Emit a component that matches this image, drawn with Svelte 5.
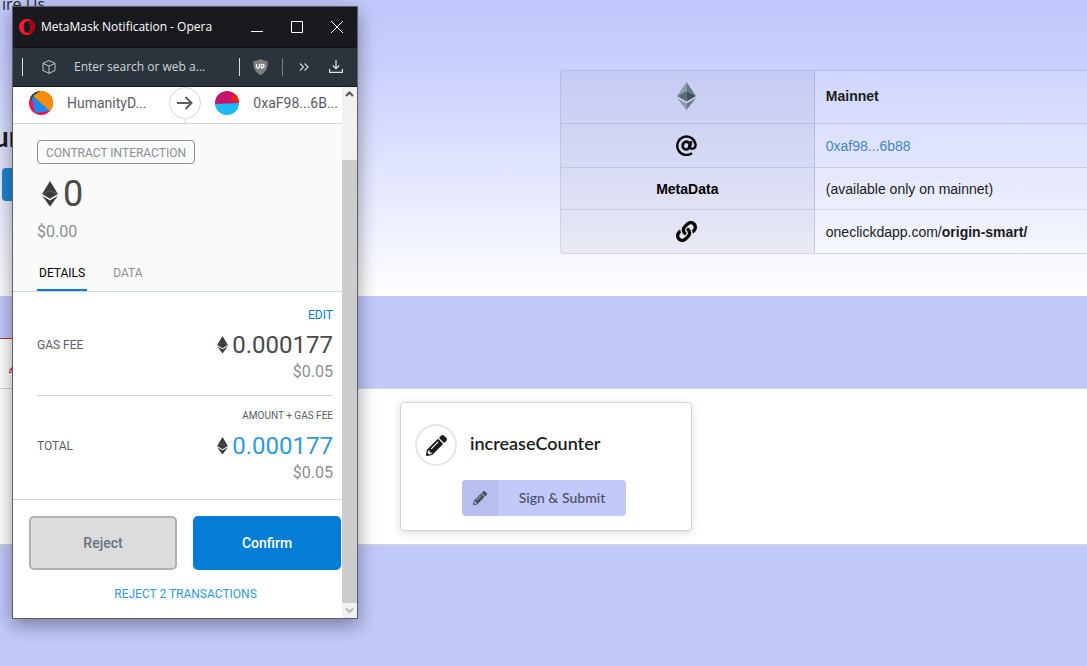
<script>
  const fees = [
    { label: 'GAS FEE', note: 'EDIT', amount: '0.000177', fiat: '$0.05', editable: true },
    { label: 'TOTAL', note: 'AMOUNT + GAS FEE', amount: '0.000177', fiat: '$0.05', editable: false }
  ];
</script>

{#snippet ether(size)}
  <svg class="ether" width={size} height={size * 1.6} viewBox="0 0 16 26" aria-hidden="true">
    <path fill="#393b3e" d="M8 0 16 13.3 8 18 0 13.3Z" />
    <path fill="#393b3e" d="M0 15 8 19.7 16 15 8 26Z" />
    <path fill="none" stroke="#85888b" stroke-width=".5" d="M0 13.3 8 9.8 16 13.3" />
  </svg>
{/snippet}

{#snippet pencil(size)}
  <svg width={size} height={size} viewBox="0 0 512 512" fill="currentColor" aria-hidden="true">
    <path d="M497.9 142.1l-46.1 46.1c-4.7 4.7-12.3 4.7-17 0l-111-111c-4.7-4.7-4.7-12.3 0-17l46.1-46.1c18.7-18.7 49.1-18.7 67.9 0l60.1 60.1c18.8 18.7 18.8 49.1 0 67.9zM284.2 99.8L21.6 362.4.4 483.9c-2.9 16.4 11.4 30.6 27.8 27.8l121.5-21.3 262.6-262.6c4.7-4.7 4.7-12.3 0-17l-111-111c-4.8-4.7-12.4-4.7-17.1 0zM124.1 339.9c-5.5-5.5-5.5-14.3 0-19.8l154-154c5.5-5.5 14.3-5.5 19.8 0s5.5 14.3 0 19.8l-154 154c-5.5 5.5-14.3 5.5-19.8 0zM88 424h48v36.3l-64.5 11.3-31.1-31.1L51.7 376H88v48z" />
  </svg>
{/snippet}

<main class="page">
  <section class="hero">
    <div class="intro">
      <a class="hire" href="#hire">ire Us</a>
      <h1>ur</h1>
      <button class="primary" aria-label="Open"></button>
    </div>
    <div class="meta">
      <table>
        <tbody>
          <tr class="tall">
            <th scope="row">
              <svg width="19" height="28" viewBox="0 0 19 28" role="img" aria-label="Network">
                <path fill="#8c9fa7" d="M9.5 0v9L0 14Z" />
                <path fill="#667b86" d="M9.5 0v9L19 14Z" />
                <path fill="#5a6c77" d="M9.5 9v10.5L0 14Z" />
                <path fill="#3f505c" d="M9.5 9v10.5L19 14Z" />
                <path fill="#8c9fa7" d="M0 16 9.5 21.5V28Z" />
                <path fill="#667b86" d="M19 16 9.5 21.5V28Z" />
              </svg>
            </th>
            <td><b>Mainnet</b></td>
          </tr>
          <tr class="medium">
            <th scope="row">
              <svg width="21" height="21" viewBox="0 0 21 21" fill="none" stroke="#080808" role="img" aria-label="Address">
                <path stroke-width="2.4" d="M16 18.100A9.200 9.200 0 1 1 19.600 9.600c0 2.800-1.600 4.200-3.500 4.200-1.600 0-2.200-.8-1.900-2.200l1.100-5.400" />
                <ellipse stroke-width="2.700" cx="10.200" cy="10.600" rx="3.500" ry="3.900" transform="rotate(18 10.200 10.600)" />
                <path stroke-width="2" d="M14.500 6.200l-1.300 6" />
              </svg>
            </th>
            <td><a href="#address">0xaf98...6b88</a></td>
          </tr>
          <tr>
            <th scope="row">MetaData</th>
            <td>(available only on mainnet)</td>
          </tr>
          <tr class="medium">
            <th scope="row">
              <svg width="21" height="21" viewBox="0 0 512 512" fill="#080808" role="img" aria-label="Link">
                <path d="M326.612 185.391c59.747 59.809 58.927 155.698.36 214.59-.11.12-.24.25-.36.37l-67.2 67.2c-59.27 59.27-155.699 59.262-214.96 0-59.27-59.26-59.27-155.7 0-214.96l37.106-37.106c9.84-9.84 26.786-3.3 27.294 10.606.648 17.722 3.826 35.527 9.69 52.721 1.986 5.822.567 12.262-3.783 16.612l-13.087 13.087c-28.026 28.026-28.905 73.66-1.155 101.96 28.024 28.579 74.086 28.749 102.325.51l67.2-67.19c28.191-28.191 28.073-73.757 0-101.83-3.701-3.694-7.429-6.564-10.341-8.569a16.037 16.037 0 0 1-6.947-12.606c-.396-10.567 3.348-21.456 11.698-29.806l21.054-21.055c5.521-5.521 14.182-6.199 20.584-1.731a152.482 152.482 0 0 1 20.522 17.197zM467.547 44.449c-59.261-59.262-155.69-59.27-214.96 0l-67.2 67.2c-.12.12-.25.25-.36.37-58.566 58.892-59.387 154.781.36 214.59a152.454 152.454 0 0 0 20.521 17.196c6.402 4.468 15.064 3.789 20.584-1.731l21.054-21.055c8.35-8.35 12.094-19.239 11.698-29.806a16.037 16.037 0 0 0-6.947-12.606c-2.912-2.005-6.64-4.875-10.341-8.569-28.073-28.073-28.191-73.639 0-101.83l67.2-67.19c28.239-28.239 74.3-28.069 102.325.51 27.75 28.3 26.872 73.934-1.155 101.96l-13.087 13.087c-4.35 4.35-5.769 10.79-3.783 16.612 5.864 17.194 9.042 34.999 9.69 52.721.509 13.906 17.454 20.446 27.294 10.606l37.106-37.106c59.271-59.259 59.271-155.699.001-214.959z" />
              </svg>
            </th>
            <td>oneclickdapp.com/<b>origin-smart/</b></td>
          </tr>
        </tbody>
      </table>
    </div>
  </section>

  <section class="band">
    <div class="notice">{@render pencil(12)}</div>
  </section>

  <section class="functions">
    <article class="card">
      <header>
        <span class="badge">{@render pencil(21)}</span>
        <h2>increaseCounter</h2>
      </header>
      <button class="submit">
        <span class="submit-icon">{@render pencil(14)}</span>
        <span class="submit-text">Sign &amp; Submit</span>
      </button>
    </article>
  </section>

  <div class="window" role="dialog" aria-label="MetaMask Notification">
    <div class="titlebar">
      <svg width="16" height="16" viewBox="0 0 16 16" aria-hidden="true">
        <path fill="#ff1b2d" fill-rule="evenodd" d="M8 0a8 8 0 1 0 0 16A8 8 0 0 0 8 0Zm0 2.2c2 0 3.3 2.5 3.3 5.8S10 13.8 8 13.8 4.7 11.300 4.700 8 6 2.200 8 2.200Z" />
        <path fill="#a70014" d="M8 2.200C10 .8 12 1 13.400 2.200a8 8 0 0 1 0 11.600C12 15 10 15.200 8 13.800c2 0 3.300-2.500 3.300-5.800S10 2.200 8 2.200Z" />
      </svg>
      <span class="title">MetaMask Notification - Opera</span>
      <button class="ctl" aria-label="Minimize"><svg width="12" height="12" viewBox="0 0 12 12"><path d="M0 10.500h12" /></svg></button>
      <button class="ctl" aria-label="Maximize"><svg width="12" height="12" viewBox="0 0 12 12"><path d="M.5.5h11v11H.5z" /></svg></button>
      <button class="ctl" aria-label="Close"><svg width="12" height="12" viewBox="0 0 12 12"><path d="M0 0 12 12M12 0 0 12" /></svg></button>
    </div>

    <div class="toolbar">
      <i class="sep"></i>
      <svg class="cube" width="14" height="14" viewBox="0 0 14 14" fill="none" stroke="#c3c7ca" stroke-linejoin="round" aria-hidden="true">
        <path d="M7 .6 13 3.300v7.200L7 13.400 1 10.500V3.300ZM1 3.300 7 6.200l6-2.900M7 6.200v7.200" />
      </svg>
      <input class="address" aria-label="Address" placeholder="Enter search or web a..." />
      <i class="sep"></i>
      <svg class="shield" width="15" height="16" viewBox="0 0 15 16" role="img" aria-label="Blocker">
        <path fill="#7d7f81" d="M7.500 0C9.500 1.300 12 2 14.500 2c.5 6-.5 10.500-7 14C1 12.500 0 8 .5 2 3 2 5.500 1.300 7.500 0Z" />
        <path fill="none" stroke="#fff" stroke-width="1.200" d="M3.500 5v2.600a1.500 1.500 0 0 0 3 0V5M8.400 5.300v3.500h1a1.700 1.700 0 0 0 0-3.500Z" />
      </svg>
      <i class="sep dim"></i>
      <svg class="more" width="10" height="8" viewBox="0 0 10 8" fill="none" stroke="#d6d9db" stroke-width="1.100" aria-hidden="true">
        <path d="M1 .5 4.500 4 1 7.500M5.500.5 9 4 5.500 7.500" />
      </svg>
      <svg width="14" height="14" viewBox="0 0 14 14" fill="none" stroke="#e1e3e4" stroke-width="1.200" aria-hidden="true">
        <path d="M7 0v8.500M3.800 5.500 7 8.700l3.200-3.200M.6 9v3.400h12.800V9" />
      </svg>
    </div>

    <div class="viewport">
      <div class="content">
        <div class="parties">
          <div class="party">
            <svg width="24" height="24" viewBox="0 0 24 24" aria-hidden="true">
              <defs><clipPath id="from"><circle cx="12" cy="12" r="12" /></clipPath></defs>
              <g clip-path="url(#from)">
                <path fill="#fc0f50" d="M0 0h24v24H0z" />
                <path fill="#03495e" d="M0 0h14L2 9Z" />
                <path fill="#188af2" d="M2.500 5.500 22 16l-2 4-14 2Z" />
                <path fill="#fb8c05" d="M4 5 14-2h14v18l-7 4Z" />
              </g>
            </svg>
            <span>HumanityD...</span>
          </div>
          <span class="arrow">
            <svg width="16" height="14" viewBox="0 0 16 14" fill="none" stroke="#5b5d60" stroke-width="2" aria-hidden="true">
              <path d="M0 7h14M8.500 1l6 6-6 6" />
            </svg>
          </span>
          <div class="party">
            <svg width="24" height="24" viewBox="0 0 24 24" aria-hidden="true">
              <defs><clipPath id="to"><circle cx="12" cy="12" r="12" /></clipPath></defs>
              <g clip-path="url(#to)">
                <path fill="#c8146a" d="M0 0h24v14H0z" />
                <path fill="#fc1e03" d="M15.500 8 20 2l6 3v8l-3-.5Z" />
                <path fill="#1abaf2" d="M0 13 24 12v12H0z" />
              </g>
            </svg>
            <span>0xaF98...6B...</span>
          </div>
        </div>

        <div class="summary">
          <span class="action">CONTRACT INTERACTION</span>
          <div class="amount">{@render ether(16)}<span>0</span></div>
          <div class="fiat">$0.00</div>
          <div class="tabs" role="tablist">
            <button class="tab active" role="tab" aria-selected="true">DETAILS</button>
            <button class="tab" role="tab" aria-selected="false">DATA</button>
          </div>
        </div>

        <div class="fees">
          {#each fees as fee}
            <div class="fee">
              <span class="label">{fee.label}</span>
              <div class="values">
                {#if fee.editable}
                  <a class="note edit" href="#edit">{fee.note}</a>
                {:else}
                  <span class="note">{fee.note}</span>
                {/if}
                <div class="value" class:total={!fee.editable}>{@render ether(11)}<span>{fee.amount}</span></div>
                <div class="fiat">{fee.fiat}</div>
              </div>
            </div>
          {/each}
        </div>

        <div class="footer">
          <div class="buttons">
            <button class="reject">Reject</button>
            <button class="confirm">Confirm</button>
          </div>
          <a class="reject-all" href="#reject">REJECT 2 TRANSACTIONS</a>
        </div>
      </div>

      <div class="scrollbar" aria-hidden="true">
        <svg width="15" height="15" viewBox="0 0 15 15" fill="none" stroke="#555" stroke-width="2"><path d="M4 9 7.500 5.500 11 9" /></svg>
        <i class="gap"></i>
        <i class="thumb"></i>
        <svg width="15" height="15" viewBox="0 0 15 15" fill="none" stroke="#b5b5b5" stroke-width="2"><path d="M4 5.500 7.500 9 11 5.500" /></svg>
      </div>
    </div>
  </div>
</main>

<style>
  :global(body) {
    margin: 0;
    background: #c2c9fb;
  }
  * {
    box-sizing: border-box;
  }
  button,
  input {
    font: inherit;
    border: 0;
    padding: 0;
    background: none;
  }
  a {
    text-decoration: none;
  }
  svg {
    display: block;
    flex: none;
  }
  .page {
    position: relative;
    min-height: 100vh;
    overflow: hidden;
    font-family: Lato, sans-serif;
    color: #1b1c1d;
  }

  .hero {
    display: grid;
    grid-template-columns: 515fr 485fr;
    height: 296px;
    background: linear-gradient(#c1c8fb, #c9d0fd 22%, #fff);
  }
  .intro {
    display: flex;
    flex-direction: column;
    align-items: flex-start;
  }
  .hire {
    margin: -8px 0 0 2px;
    font: 16px/24px "Open Sans", sans-serif;
    color: #26272e;
  }
  h1 {
    margin: 102px 0 0 -7px;
    font-size: 28px;
    line-height: 36px;
  }
  .primary {
    width: 120px;
    height: 33px;
    margin: 14px 0 0 2px;
    border-radius: 4px;
    background: #2185d0;
  }
  .meta {
    padding-top: 70px;
    margin-right: -240px;
  }
  table {
    width: 100%;
    border: 1px solid rgba(34, 36, 38, 0.15);
    border-radius: 4px;
    border-spacing: 0;
    table-layout: fixed;
    font: 14px/20px "Liberation Sans", sans-serif;
    background: rgba(255, 255, 255, 0.1);
  }
  th,
  td {
    height: 42px;
    padding: 0 11px;
    border-top: 1px solid rgba(34, 36, 38, 0.12);
    text-align: left;
    color: #1b1c1d;
  }
  tr:first-child > * {
    border-top: 0;
  }
  .medium > * {
    height: 44px;
  }
  .tall > * {
    height: 52px;
    padding-bottom: 2px;
  }
  th {
    width: 254px;
    background: rgba(0, 0, 50, 0.05);
    border-right: 1px solid rgba(34, 36, 38, 0.15);
    text-align: center;
    color: #000;
  }
  th:has(svg) {
    padding-right: 13px;
  }
  th svg {
    margin: 0 auto;
  }
  td a {
    color: #4183c4;
  }

  .band {
    height: 92px;
    padding-top: 42px;
  }
  .notice {
    width: 25%;
    height: 52px;
    padding: 22px 0 0 9px;
    border-top: 1px solid #db2828;
    background: #fff;
    color: #db2828;
  }
  .functions {
    padding: 13px 0 13px 400px;
    border-top: 1px solid #d4d4d5;
    border-bottom: 1px solid #d4d4d5;
    background: #fff;
  }
  .card {
    width: 292px;
    padding: 21px 14px 14px;
    border: 1px solid #d4d4d5;
    border-radius: 4px;
    box-shadow: 0 2px 8px rgba(34, 36, 38, 0.16);
  }
  .card header {
    display: flex;
    gap: 13px;
  }
  .badge {
    display: grid;
    place-items: center;
    width: 42px;
    height: 42px;
    border: 2px solid #e6e6e6;
    border-radius: 50%;
  }
  h2 {
    margin: 0;
    font-size: 18px;
    line-height: 38px;
    font-weight: 600;
  }
  .submit {
    display: flex;
    width: 164px;
    height: 36px;
    margin: 14px 0 0 47px;
    border-radius: 4px;
    overflow: hidden;
    background: #c2c9fb;
    color: rgba(0, 0, 0, 0.6);
    font-size: 14px;
    font-weight: 600;
    line-height: 36px;
  }
  .submit-icon {
    display: grid;
    place-items: center;
    width: 36px;
    height: 36px;
    background: rgba(0, 0, 0, 0.05);
  }
  .submit-text {
    flex: 1;
  }

  .window {
    position: absolute;
    left: 12px;
    top: 6px;
    width: 346px;
    border: 1px solid #5d5e68;
    background: #fff;
    box-shadow: 0 6px 18px rgba(0, 0, 0, 0.4);
    font-family: Roboto, sans-serif;
    color: #5b5d67;
  }
  .titlebar {
    display: flex;
    align-items: center;
    height: 41px;
    padding-left: 6px;
    border-bottom: 1px solid #0e1012;
    background: #181a1e;
    font: 12px/16px "Open Sans", sans-serif;
    color: #fff;
  }
  .title {
    flex: 1;
    padding-left: 6px;
    white-space: nowrap;
  }
  .ctl {
    display: grid;
    place-items: center;
    width: 40px;
    height: 39px;
  }
  .ctl svg {
    fill: none;
    stroke: #fff;
  }
  .toolbar {
    display: flex;
    align-items: center;
    height: 39px;
    padding: 0 14px 0 9px;
    border-bottom: 1px solid #13171a;
    background: #2b343c;
  }
  .sep {
    width: 1px;
    height: 18px;
    background: #d9dbdd;
  }
  .dim {
    background: #777d82;
  }
  .cube {
    margin: 0 18px 0 19px;
  }
  .address {
    flex: 1;
    min-width: 0;
    height: 24px;
    font: 12px/24px "Open Sans", sans-serif;
    color: #e1e3e4;
  }
  .address::placeholder {
    color: #d2d5d7;
    opacity: 1;
  }
  .shield {
    margin: 0 14px 0 13px;
  }
  .more {
    margin: 0 20px 0 16px;
  }

  .viewport {
    display: flex;
  }
  .content {
    flex: 1;
    min-width: 0;
  }
  .parties {
    display: flex;
    align-items: flex-start;
    height: 37px;
    padding-left: 16px;
    border-bottom: 1px solid #d2d8dd;
    font-size: 14px;
    line-height: 24px;
    white-space: nowrap;
  }
  .party {
    display: flex;
    gap: 14px;
    padding: 4px 4px 0 0;
  }
  .arrow {
    position: relative;
    display: grid;
    place-items: center;
    width: 32px;
    height: 32px;
    margin: 0 14px 0 auto;
    border: 1px solid #d2d8dd;
    border-radius: 50%;
  }
  .arrow::after {
    content: "";
    position: absolute;
    left: 15px;
    top: 31px;
    width: 1px;
    height: 5px;
    background: #d2d8dd;
  }
  .summary {
    padding: 16px 24px 0;
    border-bottom: 1px solid #d2d8dd;
    background: #f9fafa;
  }
  .action {
    display: block;
    width: max-content;
    height: 24px;
    padding: 0 8px;
    border: 1px solid #8c8e94;
    border-radius: 4px;
    font-size: 12px;
    line-height: 24px;
    color: #8c8e94;
  }
  .amount {
    display: flex;
    align-items: center;
    gap: 5px;
    margin: 9px 0 8px 5px;
    font-size: 36px;
    line-height: 42px;
    color: #4a4a4a;
  }
  .fiat {
    font-size: 16px;
    line-height: 18px;
    color: #8c8e94;
  }
  .tabs {
    display: flex;
    gap: 24px;
    margin-top: 15px;
  }
  .tab {
    height: 35px;
    padding: 2px 2px 0;
    border-bottom: 2px solid transparent;
    font-size: 12px;
    line-height: 31px;
    color: #8c8e94;
  }
  .active {
    border-color: #037dd6;
    color: #000;
  }
  .fees {
    padding: 0 9px 0 24px;
    border-bottom: 1px solid #d2d8dd;
  }
  .fee {
    display: flex;
    align-items: center;
    justify-content: space-between;
    padding: 16px 0 14px;
  }
  .fee + .fee {
    padding: 13px 0 17px;
    border-top: 1px solid #d2d8dd;
  }
  .label {
    font-size: 12px;
    line-height: 16px;
  }
  .values {
    display: flex;
    flex-direction: column;
    align-items: flex-end;
  }
  .note {
    font-size: 10px;
    line-height: 14px;
  }
  .edit {
    font-size: 12px;
    color: #037dd6;
  }
  .value {
    display: flex;
    align-items: center;
    gap: 4px;
    margin: 7px 0 2px;
    font-size: 24px;
    line-height: 32px;
    color: #4a4a4a;
  }
  .total {
    color: #2f9ae0;
  }
  .footer {
    padding: 16px 0 15px 16px;
  }
  .buttons {
    display: grid;
    grid-template-columns: 1fr 1fr;
    gap: 16px;
    padding-right: 1px;
  }
  .buttons button {
    height: 54px;
    border-radius: 5px;
    font-size: 14px;
    font-weight: 500;
  }
  .buttons .reject {
    border: 2px solid #b0b0b0;
    background: #dcdcdc;
    color: #6a737d;
  }
  .buttons .confirm {
    background: #037dd6;
    color: #fff;
  }
  .reject-all {
    display: block;
    margin-top: 16px;
    font-size: 12px;
    line-height: 17px;
    text-align: center;
    color: #2f9ae0;
  }
  .scrollbar {
    display: flex;
    flex-direction: column;
    width: 15px;
    background: #f1f1f1;
  }
  .gap {
    flex: 58;
  }
  .thumb {
    flex: 443;
    background: #cdcdcd;
  }
</style>
